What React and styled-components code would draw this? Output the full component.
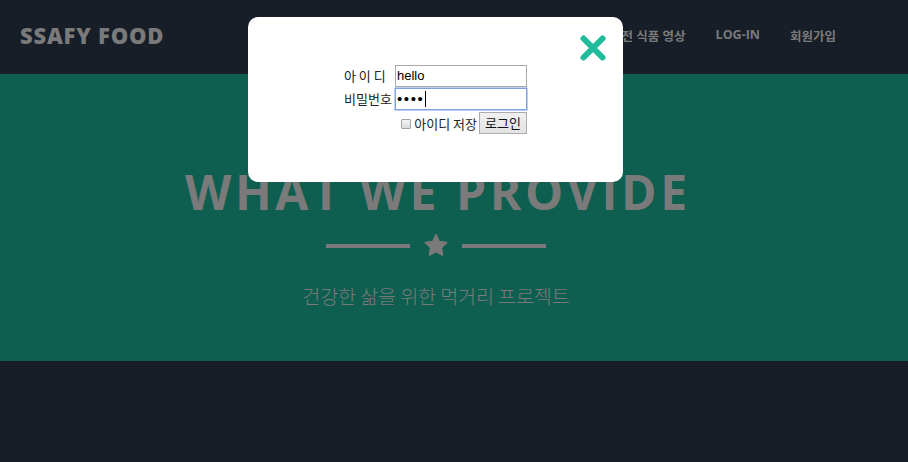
import React from "react";
import styled, { createGlobalStyle } from "styled-components";

const Global = createGlobalStyle`
  html, body { margin: 0; padding: 0; background: #171e28; }
  body { font-family: "Noto Sans", "Noto Sans CJK KR", sans-serif; }
  * { box-sizing: border-box; }
`;

const Page = styled.div`
  position: relative;
  width: 908px;
  height: 462px;
  background: #171e28;
  overflow: hidden;
`;

const Nav = styled.nav`
  height: 74px;
  display: flex;
  align-items: center;
  justify-content: space-between;
  padding: 0 0 0 20px;
`;

const Brand = styled.div`
  font-family: "Open Sans", "Noto Sans CJK KR", sans-serif;
  font-weight: 800;
  font-size: 22px;
  letter-spacing: 0.75px;
  color: #7a7a7a;
  margin-top: -4px;
`;

const Menu = styled.ul`
  list-style: none;
  margin: 0;
  padding: 0 72px 0 0;
  display: flex;
  gap: 30px;
  margin-top: -4px;
`;

const MenuItem = styled.li`
  font-family: "Open Sans", "Noto Sans CJK KR", sans-serif;
  font-weight: 700;
  font-size: 12.5px;
  color: #7a7a7a;
`;

const Hero = styled.section`
  height: 287px;
  background: #0e5f4f;
  display: flex;
  flex-direction: column;
  align-items: center;
  padding: 89px 36px 0 0;
`;

const Title = styled.h1`
  margin: 0 -3.6px 0 0;
  font-family: "Open Sans", sans-serif;
  font-weight: 700;
  font-size: 48px;
  line-height: 58px;
  color: #7a7a7a;
  letter-spacing: 3.6px;
`;

const Divider = styled.div`
  display: flex;
  align-items: center;
  gap: 13px;
  margin-top: 12px;
`;

const Line = styled.span`
  width: 84px;
  height: 4px;
  background: #7a7a7a;
`;

const Subtitle = styled.p`
  margin: 23px 0 0;
  font-family: "Noto Sans CJK KR", sans-serif;
  font-weight: 300;
  font-size: 19.7px;
  color: #7a7a7a;
  letter-spacing: -0.2px;
`;

const Modal = styled.div`
  position: absolute;
  left: 248px;
  top: 17px;
  width: 375px;
  height: 165px;
  background: #fff;
  border-radius: 10px;
  display: flex;
  justify-content: center;
  padding-top: 47px;
`;

const Close = styled.button`
  position: absolute;
  right: 15px;
  top: 16px;
  width: 30px;
  height: 30px;
  padding: 0;
  border: none;
  background: transparent;
  display: flex;
  align-items: center;
  justify-content: center;
`;

const Form = styled.table`
  border-collapse: collapse;
  font-family: "Noto Sans CJK KR", sans-serif;
  font-size: 13px;
  color: #222;
  align-self: flex-start;
`;

const Label = styled.td`
  padding: 0 2px 0 0;
  width: 51px;
  height: 23px;
  vertical-align: middle;
  white-space: nowrap;
  line-height: 16px;
`;

const Cell = styled.td`
  position: relative;
  padding: 0;
  height: 23px;
`;

const Input = styled.input`
  display: block;
  width: 132px;
  height: 22px;
  margin: 0;
  padding: 0 1px;
  border: 1px solid ${(p) => (p.$focused ? "#7fa1e0" : "#a9a9a9")};
  box-shadow: ${(p) => (p.$focused ? "0 0 0 0.5px #7fa1e0" : "none")};
  font-family: "Liberation Sans", Arial, sans-serif;
  font-size: ${(p) => (p.$focused ? "15px" : "13px")};
  color: #000;
  outline: none;
  letter-spacing: ${(p) => (p.$focused ? "1.6px" : "0")};
`;

const Caret = styled.span`
  position: absolute;
  left: 30px;
  top: 4px;
  width: 1px;
  height: 16px;
  background: #000;
`;

const Actions = styled.div`
  display: flex;
  justify-content: flex-end;
  align-items: center;
  height: 24px;
  margin-top: 1px;
`;

const Check = styled.input`
  appearance: none;
  width: 10px;
  height: 10px;
  margin: 2px 3px 0 0;
  border: 1px solid #a5a5a5;
  background: linear-gradient(#f4f4f4, #dcdcdc);
  border-radius: 1px;
`;

const CheckText = styled.span`
  font-size: 13px;
  color: #222;
  margin-right: 2px;
`;

const Button = styled.button`
  width: 48px;
  height: 22px;
  padding: 0;
  border: 1px solid #adadad;
  background: linear-gradient(#f0f0f0, #e3e3e3);
  font-family: "Noto Sans CJK KR", sans-serif;
  font-size: 13px;
  color: #111;
  line-height: 18px;
`;

const Star = () => (
  <svg width="26" height="25" viewBox="0 0 24 24">
    <path
      d="M12 1.8l3.1 6.5 7.1.9-5.2 4.9 1.3 7-6.3-3.4-6.3 3.4 1.3-7L1.8 9.2l7.1-.9z"
      fill="#7a7a7a"
      stroke="#7a7a7a"
      strokeWidth="1.6"
      strokeLinejoin="round"
    />
  </svg>
);

const CloseIcon = () => (
  <svg width="28" height="28" viewBox="0 0 28 28">
    <path d="M4.5 4.5L23.5 23.5M23.5 4.5L4.5 23.5" stroke="#1fbb9b" strokeWidth="6" strokeLinecap="round" />
  </svg>
);

export default function App() {
  return (
    <Page>
      <Global />
      <Nav>
        <Brand>SSAFY FOOD</Brand>
        <Menu>
          <MenuItem>안전 식품 영상</MenuItem>
          <MenuItem>LOG-IN</MenuItem>
          <MenuItem>회원가입</MenuItem>
        </Menu>
      </Nav>
      <Hero>
        <Title>WHAT WE PROVIDE</Title>
        <Divider>
          <Line />
          <Star />
          <Line />
        </Divider>
        <Subtitle>건강한 삶을 위한 먹거리 프로젝트</Subtitle>
      </Hero>
      <Modal>
        <Close aria-label="닫기">
          <CloseIcon />
        </Close>
        <Form>
          <tbody>
            <tr>
              <Label>아 이 디</Label>
              <Cell>
                <Input type="text" defaultValue="hello" readOnly />
              </Cell>
            </tr>
            <tr>
              <Label>비밀번호</Label>
              <Cell>
                <Input type="password" defaultValue="1234" readOnly $focused />
                <Caret />
              </Cell>
            </tr>
            <tr>
              <Cell />
              <Cell>
                <Actions>
                  <Check type="checkbox" />
                  <CheckText>아이디 저장</CheckText>
                  <Button type="button">로그인</Button>
                </Actions>
              </Cell>
            </tr>
          </tbody>
        </Form>
      </Modal>
    </Page>
  );
}
